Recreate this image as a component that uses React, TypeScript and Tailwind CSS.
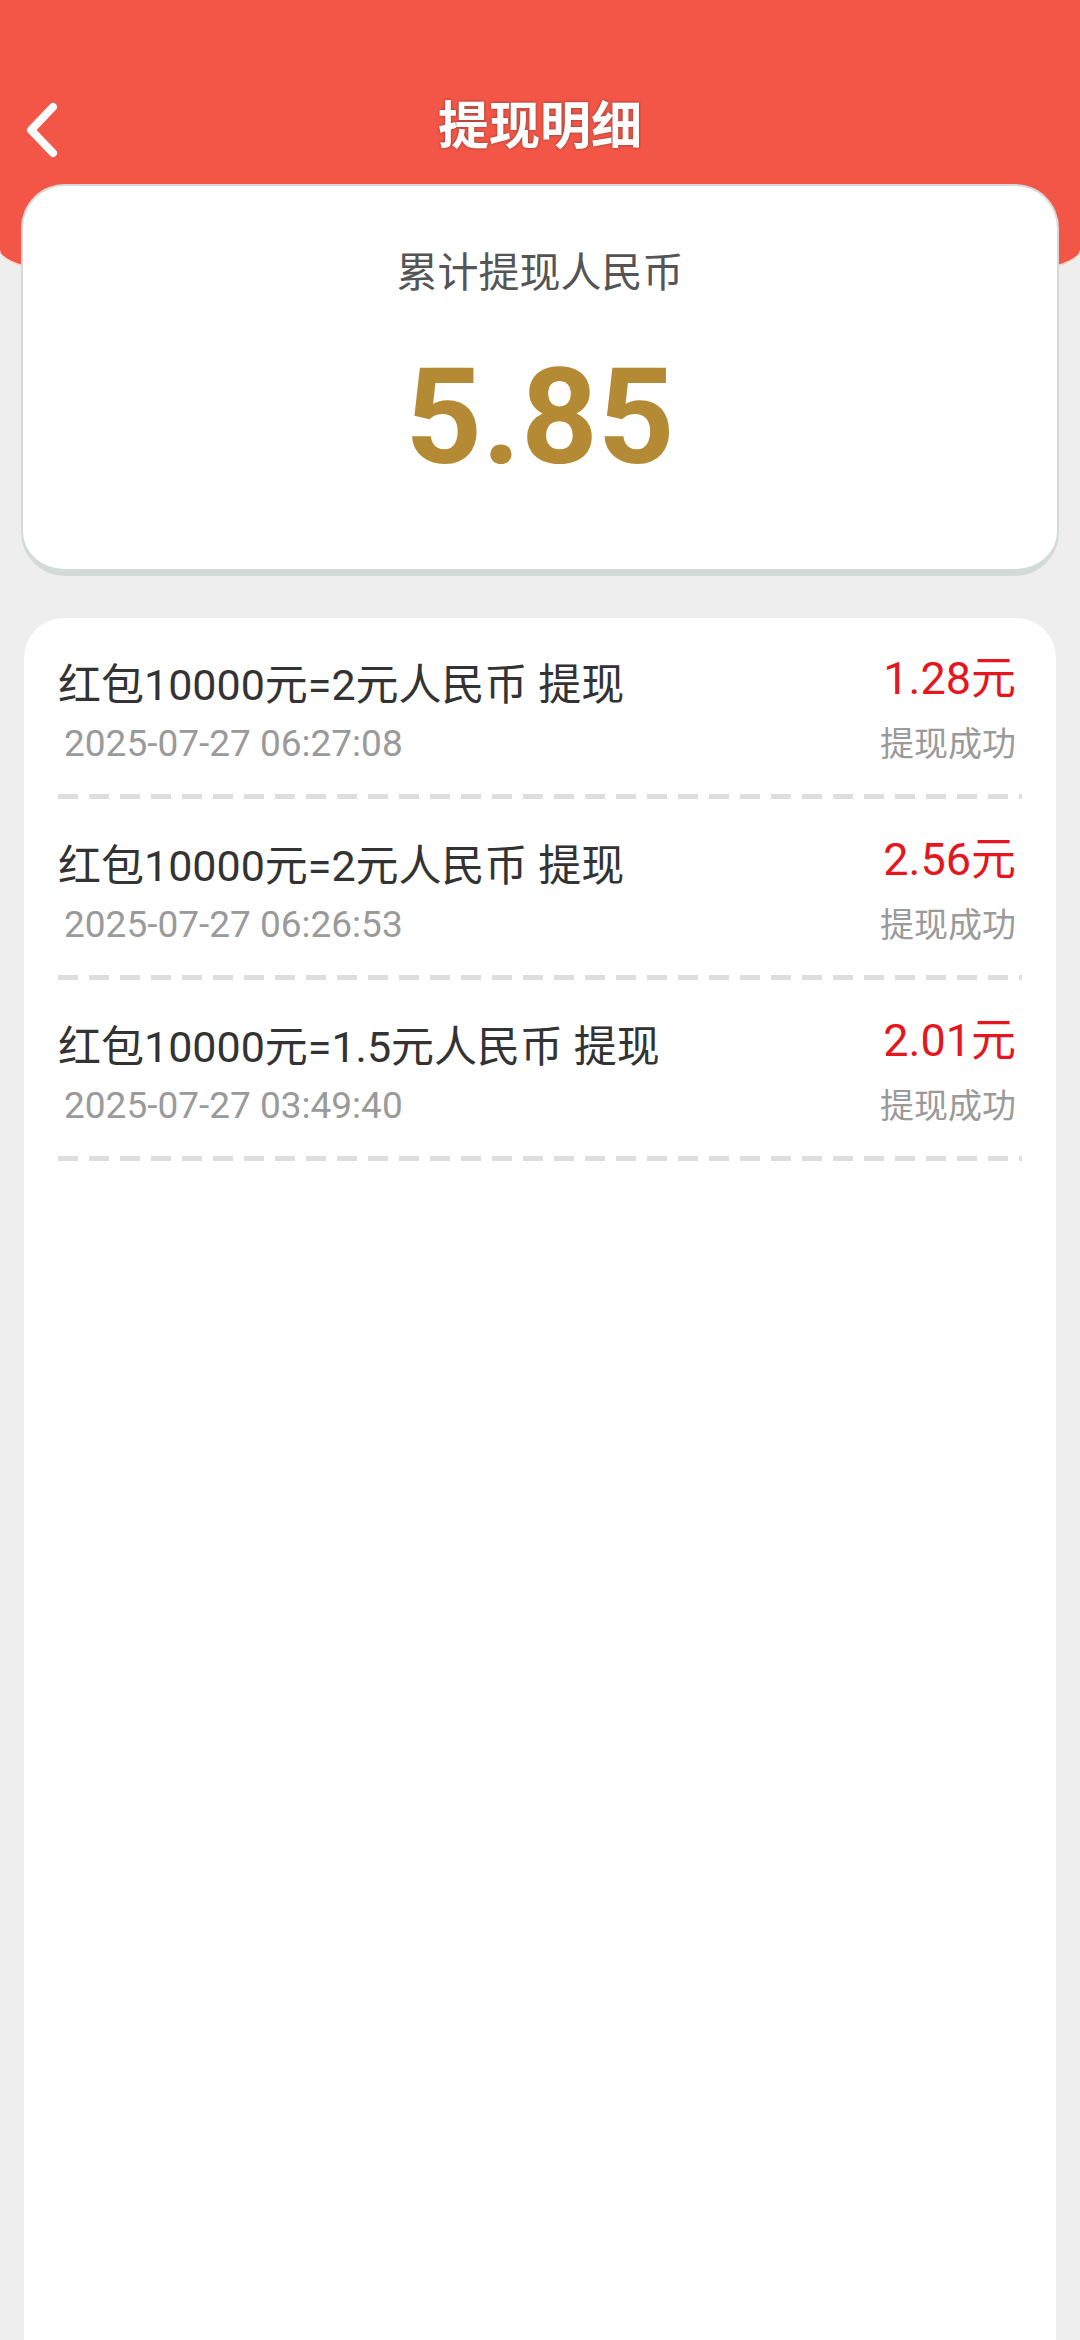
import React from "react";

const records = [
  { title: "红包10000元=2元人民币 提现", time: "2025-07-27 06:27:08", amount: "1.28元" },
  { title: "红包10000元=2元人民币 提现", time: "2025-07-27 06:26:53", amount: "2.56元" },
  { title: "红包10000元=1.5元人民币 提现", time: "2025-07-27 03:49:40", amount: "2.01元" },
];

export default function App() {
  return (
    <div className="flex min-h-[2340px] flex-col bg-[#eeeeee] font-['Roboto','Noto_Sans_CJK_SC',sans-serif]">
      {/* Header */}
      <div className="h-[310px] rounded-b-[540px_60px] border-b-[8px] border-[#fbd8c8] bg-[#f35646]">
        <div className="relative flex h-[184px] items-center justify-center pt-[68px]">
          <svg className="absolute left-[22px] top-[97px]" width="44" height="66" viewBox="0 0 44 66">
            <path d="M31 10 L9 33 L31 56" fill="none" stroke="white" strokeWidth="8" strokeLinecap="round" strokeLinejoin="round" />
          </svg>
          <h1 className="text-[51px] font-bold leading-none text-white [text-shadow:0_0_3px_#7a3a32]">提现明细</h1>
        </div>
      </div>

      {/* Summary card */}
      <div className="mx-[21px] -mt-[126px] h-[392px] rounded-[44px] border-2 border-b-[7px] border-[#d3dad8] bg-white pt-[62px] text-center">
        <p className="text-[41px] leading-[50px] text-[#555555]">累计提现人民币</p>
        <p className="mt-[50px] text-[134px] font-bold leading-[140px] text-[#b58a35]">5.85</p>
      </div>

      {/* Records */}
      <div className="mx-[24px] mt-[42px] flex-1 rounded-t-[40px] bg-white px-[34px]">
        {records.map((r, i) => (
          <div key={i}>
            <div className="flex justify-between pb-[30px] pr-[6px] pt-[42px]">
              <div>
                <p className="text-[43px] leading-[50px] text-[#333333]">{r.title}</p>
                <p className="mt-[14px] pl-[6px] text-[37px] leading-[40px] text-[#9a9a9a]">{r.time}</p>
              </div>
              <div className="text-right">
                <p className="-mt-[6px] text-[45px] leading-[50px] text-[#e5161e]">{r.amount}</p>
                <p className="mt-[20px] text-[34px] leading-[40px] text-[#9a9a9a]">提现成功</p>
              </div>
            </div>
            <div className="h-[5px] bg-[repeating-linear-gradient(to_right,#dedede_0_20px,transparent_20px_31px)]" />
          </div>
        ))}
      </div>
    </div>
  );
}
